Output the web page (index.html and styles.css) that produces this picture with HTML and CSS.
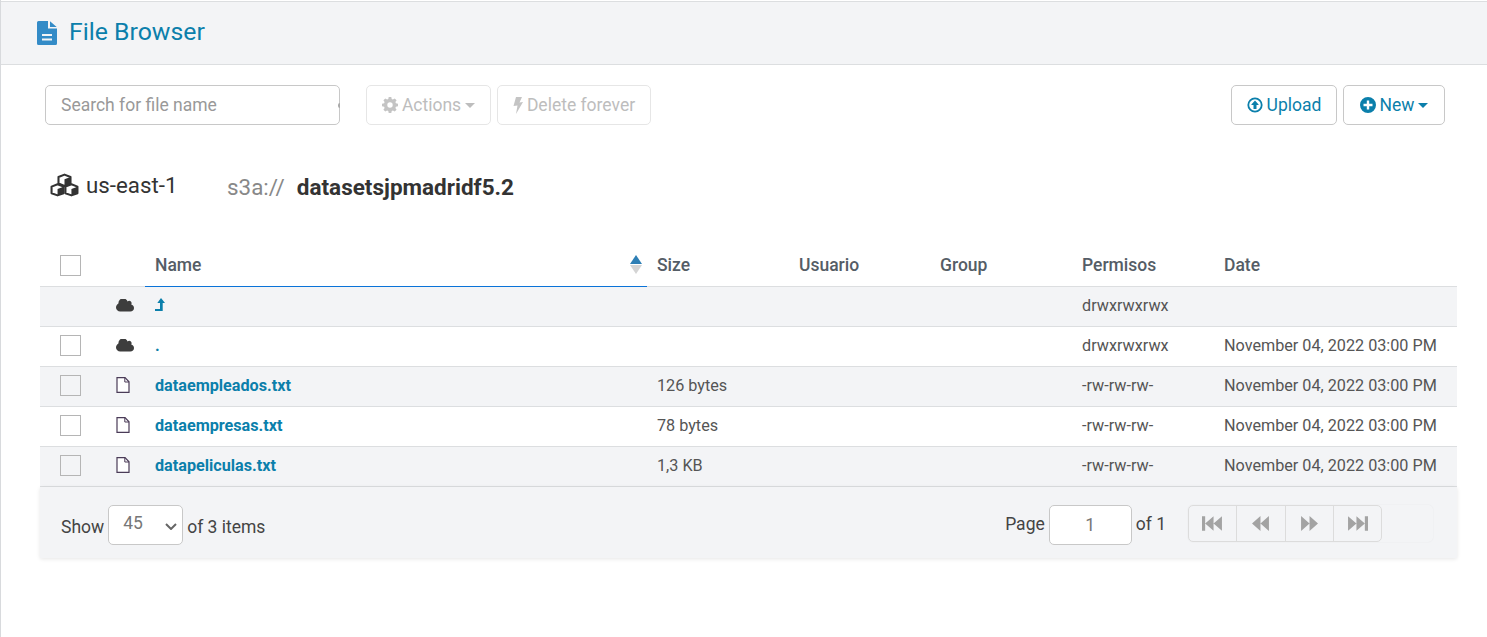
FILE: index.html
```html
<!DOCTYPE html>
<html lang="en">
<head>
  <meta charset="UTF-8" />
  <title>File Browser</title>
  <link rel="stylesheet" href="styles.css">
</head>
<body>

  <header class="page-header">
    <svg class="title-icon" viewBox="0 0 20 24"><path fill="#338bc7" d="M1.500 0H11v7.500h9V22.500a1.500 1.500 0 0 1-1.500 1.500H1.500A1.500 1.500 0 0 1 0 22.500V1.500A1.500 1.500 0 0 1 1.500 0zM13 0.300L19.700 6H13zM5 13v2h10v-2zM5 17.500v2h10v-2z" fill-rule="evenodd"/></svg>
    <h1>File Browser</h1>
  </header>

  <main class="content">
    <div class="toolbar">
      <div class="toolbar-left">
        <div class="search-box">
          <input class="search" type="text" placeholder="Search for file name" />
          <span class="search-clip"></span>
        </div>
        <button class="btn btn-disabled btn-actions">
          <svg class="icon" viewBox="0 0 16 16"><path fill="#c4c4c4" fill-rule="evenodd" d="M6.700 0h2.600l.4 2.100 1.200.5L12.700 1.400l1.900 1.900-1.200 1.800.5 1.200 2.100.4v2.600l-2.100.4-.5 1.200 1.200 1.800-1.900 1.900-1.800-1.200-1.200.5-.4 2.100H6.700l-.4-2.100-1.200-.5-1.800 1.200-1.900-1.900 1.200-1.800-.5-1.200L0 9.300V6.700l2.100-.4.5-1.200-1.200-1.800 1.900-1.900 1.800 1.200 1.200-.5zM8 5.300a2.700 2.700 0 1 0 0 5.400 2.700 2.700 0 0 0 0-5.400z"/></svg>
          Actions <span class="caret"></span>
        </button>
        <button class="btn btn-disabled btn-delete">
          <svg class="icon icon-bolt" viewBox="0 0 10 17"><path fill="#c4c4c4" d="M3 0h6L6.500 5.500 10 5 3 17l1.500-8.500L0.500 9z"/></svg>
          Delete forever
        </button>
      </div>
      <div class="toolbar-right">
        <button class="btn btn-upload">
          <svg class="icon" viewBox="0 0 16 16"><circle cx="8" cy="8" r="6.700" fill="none" stroke="#0b7fab" stroke-width="1.800"/><path fill="#0b7fab" d="M8 3.600l3.600 3.900v.6H9.500v4H6.500v-4H4.400v-.6z"/></svg>
          Upload
        </button>
        <button class="btn btn-new">
          <svg class="icon" viewBox="0 0 16 16"><path fill="#0b7fab" fill-rule="evenodd" d="M8 0a8 8 0 1 1 0 16A8 8 0 0 1 8 0zM6.800 3.500v3.300H3.500v2.400h3.300v3.300h2.400V9.200h3.300V6.800H9.200V3.500z"/></svg>
          New <span class="caret"></span>
        </button>
      </div>
    </div>

    <div class="location">
      <div class="region">
        <svg class="cubes" viewBox="0 0 28 22"><g stroke="#333" stroke-width="2" stroke-linejoin="round" fill="#fff"><path d="M14 1l5.800 2.300v6.300L14 11.900 8.200 9.600V3.300z"/><path d="M7.300 10.300l5.800 2.300v6.300l-5.800 2.100-5.800-2.100v-6.300z"/><path d="M20.700 10.300l5.800 2.300v6.300l-5.800 2.100-5.800-2.100v-6.300z"/></g><path fill="#333" d="M14 5.500l5.800-2.200v6.300L14 11.900zM7.300 14.900l5.800-2.300v6.300l-5.800 2.100zM20.700 14.900l5.800-2.300v6.300l-5.800 2.100z"/></svg>
        <span>us-east-1</span>
      </div>
      <div class="path"><span class="scheme">s3a://</span><strong>datasetsjpmadridf5.2</strong></div>
    </div>

    <table class="files">
      <colgroup>
        <col class="col-check"><col class="col-icon"><col class="col-name"><col class="col-size"><col class="col-user"><col class="col-group"><col class="col-perm"><col>
      </colgroup>
      <thead>
        <tr>
          <th class="check-cell"><span class="check"></span></th>
          <th></th>
          <th class="sorted">Name<span class="sort-arrows"><i class="up"></i><i class="down"></i></span></th>
          <th>Size</th>
          <th>Usuario</th>
          <th>Group</th>
          <th>Permisos</th>
          <th>Date</th>
        </tr>
      </thead>
      <tbody>
        <tr class="odd">
          <td></td>
          <td class="icon-cell"><svg class="cloud" viewBox="0 230 1920 1310"><path fill="#3d3d3d" d="M1920 1152q0 159-112.500 271.500t-271.500 112.500h-1088q-185 0-316.500-131.500t-131.500-316.500q0-132 71-241.500t187-163.500q-2-28-2-43 0-212 150-362t362-150q158 0 286.500 88t187.500 230q70-62 166-62 106 0 181 75t75 181q0 75-41 138 129 30 213 134.500t84 239.500z"/></svg></td>
          <td><a href="#"><svg class="level-up" viewBox="0 0 10 13"><path fill="#0b7fab" d="M6 0l4 5H7.700v8H0v-2h5V5H2.300z"/></svg></a></td>
          <td></td><td></td><td></td>
          <td>drwxrwxrwx</td>
          <td></td>
        </tr>
        <tr>
          <td class="check-cell"><span class="check"></span></td>
          <td class="icon-cell"><svg class="cloud" viewBox="0 230 1920 1310"><path fill="#3d3d3d" d="M1920 1152q0 159-112.500 271.500t-271.500 112.500h-1088q-185 0-316.500-131.500t-131.500-316.500q0-132 71-241.500t187-163.500q-2-28-2-43 0-212 150-362t362-150q158 0 286.500 88t187.500 230q70-62 166-62 106 0 181 75t75 181q0 75-41 138 129 30 213 134.500t84 239.500z"/></svg></td>
          <td><a href="#">.</a></td>
          <td></td><td></td><td></td>
          <td>drwxrwxrwx</td>
          <td>November 04, 2022 03:00 PM</td>
        </tr>
        <tr class="odd">
          <td class="check-cell"><span class="check"></span></td>
          <td class="icon-cell"><svg class="file" viewBox="0 0 14 16"><path fill="#fff" stroke="#4a3b57" stroke-width="1.200" d="M1 .6h8l4 4.200v10.600H1z"/><path fill="none" stroke="#4a3b57" d="M8.800 .6v4.400H13"/></svg></td>
          <td><a href="#">dataempleados.txt</a></td>
          <td>126 bytes</td><td></td><td></td>
          <td>-rw-rw-rw-</td>
          <td>November 04, 2022 03:00 PM</td>
        </tr>
        <tr>
          <td class="check-cell"><span class="check"></span></td>
          <td class="icon-cell"><svg class="file" viewBox="0 0 14 16"><path fill="#fff" stroke="#4a3b57" stroke-width="1.200" d="M1 .6h8l4 4.200v10.600H1z"/><path fill="none" stroke="#4a3b57" d="M8.800 .6v4.400H13"/></svg></td>
          <td><a href="#">dataempresas.txt</a></td>
          <td>78 bytes</td><td></td><td></td>
          <td>-rw-rw-rw-</td>
          <td>November 04, 2022 03:00 PM</td>
        </tr>
        <tr class="odd">
          <td class="check-cell"><span class="check"></span></td>
          <td class="icon-cell"><svg class="file" viewBox="0 0 14 16"><path fill="#fff" stroke="#4a3b57" stroke-width="1.200" d="M1 .6h8l4 4.200v10.600H1z"/><path fill="none" stroke="#4a3b57" d="M8.800 .6v4.400H13"/></svg></td>
          <td><a href="#">datapeliculas.txt</a></td>
          <td>1,3 KB</td><td></td><td></td>
          <td>-rw-rw-rw-</td>
          <td>November 04, 2022 03:00 PM</td>
        </tr>
      </tbody>
    </table>

    <div class="table-footer">
      <div class="show">
        <span>Show</span>
        <div class="select-wrap">
          <select class="page-size"><option>45</option></select>
          <svg class="chevron" viewBox="0 0 12 7"><path fill="none" stroke="#666" stroke-width="2" d="M1 1l5 5 5-5"/></svg>
        </div>
        <span>of 3 items</span>
      </div>
      <div class="paging">
        <span>Page</span>
        <input class="page-input" type="text" value="1" />
        <span>of 1</span>
        <div class="pager-wrap">
          <div class="pager">
            <button><svg viewBox="0 0 20 14"><path d="M0 0h3v14H0zM3 7l8-7v14zM11 7l8-7v14z"/></svg></button>
            <button><svg class="short" viewBox="0 0 17 14"><path d="M0 7l8-7v14zM8 7l8-7v14z"/></svg></button>
            <button><svg class="short" viewBox="0 0 17 14"><path d="M1 0l8 7-8 7zM9 0l8 7-8 7z"/></svg></button>
            <button><svg viewBox="0 0 20 14"><path d="M1 0l8 7-8 7zM9 0l8 7-8 7zM17 0h3v14h-3z"/></svg></button>
          </div>
        </div>
      </div>
    </div>
  </main>

</body>
</html>
```

FILE: styles.css
```css
* {
  box-sizing: border-box;
}

html, body {
  height: 100%;
}

body {
  margin: 0;
  padding-top: 1px;
  font-family: Roboto, "Liberation Sans", sans-serif;
  font-size: 14px;
  color: #444;
  background-color: #fff;
  border-left: 1px solid #d8dadd;
  overflow: hidden;
}

.page-header {
  height: 64px;
  display: flex;
  align-items: center;
  padding: 0 0 4px 36px;
  background-color: #f3f4f6;
  border-top: 1px solid #dcdee0;
  border-bottom: 1px solid #dcdee0;
}

.title-icon {
  width: 20px;
  height: 24px;
  margin: 4px 12px 0 0;
}

.page-header h1 {
  margin: 0;
  font-size: 24.800px;
  font-weight: 400;
  color: #0b7fab;
}

.content {
  padding: 20px 30px 0 39px;
}

.toolbar {
  display: flex;
  justify-content: space-between;
  padding: 0 12px 0 5px;
}

.toolbar-left, .toolbar-right {
  display: flex;
  gap: 6px;
}

.search-box {
  position: relative;
  margin-right: 20px;
}

.search {
  display: block;
  width: 295px;
  height: 40px;
  padding: 0 15px;
  font-family: inherit;
  font-size: 17.500px;
  border: 1px solid #c8c8c8;
  border-radius: 5px;
  outline: none;
}

.search::placeholder {
  color: #999;
}

.search-clip {
  position: absolute;
  right: 0;
  top: 18px;
  width: 2px;
  height: 5px;
  background-color: #aaa;
  border-radius: 2px 0 0 2px;
}

.btn {
  height: 40px;
  display: inline-flex;
  align-items: center;
  justify-content: center;
  gap: 4px;
  font-family: inherit;
  font-size: 17.500px;
  background-color: #fff;
  color: #0b7fab;
  border: 1px solid #c8c8c8;
  border-radius: 5px;
}

.btn-disabled {
  color: #bdbdbd;
  border-color: #e6e6e6;
}

.btn-actions { width: 125px; }
.btn-delete { width: 154px; }
.btn-upload { width: 106px; }
.btn-new { width: 102px; }

.icon {
  width: 16px;
  height: 16px;
}

.icon-bolt {
  width: 10px;
  height: 17px;
}

.caret {
  width: 0;
  height: 0;
  border-left: 5px solid transparent;
  border-right: 5px solid transparent;
  border-top: 5px solid currentColor;
}

.location {
  display: flex;
  align-items: center;
  height: 44px;
  margin-top: 40px;
  padding-left: 10px;
}

.region {
  width: 177px;
  display: flex;
  align-items: center;
  gap: 7px;
  margin-top: -5px;
  font-size: 22.300px;
  color: #333;
}

.cubes {
  width: 29px;
  height: 24px;
}

.scheme {
  margin-right: 12px;
  font-size: 22.400px;
  color: #888;
}

.path strong {
  font-size: 22.500px;
  font-weight: 700;
  color: #333;
}

.files {
  width: 100%;
  margin-top: 37px;
  table-layout: fixed;
  border-collapse: collapse;
}

.col-check { width: 65px; }
.col-icon { width: 40px; }
.col-name { width: 502px; }
.col-size { width: 142px; }
.col-user { width: 141px; }
.col-group { width: 142px; }
.col-perm { width: 142px; }

.files th {
  height: 40px;
  padding: 0 10px 2px;
  text-align: left;
  font-size: 17.500px;
  font-weight: 500;
  color: #555d66;
  border-bottom: 1px solid #dcdee0;
}

.files th.sorted {
  position: relative;
  border-bottom-color: #0a73d8;
}

.sort-arrows {
  position: absolute;
  right: 5px;
  top: 9px;
  display: flex;
  flex-direction: column;
  gap: 1px;
}

.sort-arrows i {
  width: 0;
  height: 0;
  border-left: 6px solid transparent;
  border-right: 6px solid transparent;
}

.sort-arrows .up {
  border-bottom: 9px solid #2e7fb5;
}

.sort-arrows .down {
  border-top: 9px solid #d4d4d4;
}

.files td {
  height: 40px;
  padding: 0 10px 2px;
  font-size: 16.200px;
  color: #555;
  border-bottom: 1px solid #dcdee0;
  white-space: nowrap;
}

.files tr.odd td {
  background-color: #f3f4f6;
}

.files td a {
  font-weight: 700;
  color: #0b7fab;
  text-decoration: none;
}

.files .check-cell {
  padding-left: 20px;
}

.files th.check-cell {
  padding-bottom: 0;
}

.check {
  display: block;
  width: 21px;
  height: 21px;
  border: 1px solid #b5b5b5;
}

.files .icon-cell {
  padding: 0 0 2px 11px;
}

.icon-cell svg {
  display: block;
}

.cloud {
  width: 18px;
  height: 13px;
}

.file {
  width: 14px;
  height: 16px;
}

.level-up {
  width: 10px;
  height: 13px;
}

.table-footer {
  height: 71px;
  display: flex;
  justify-content: space-between;
  padding: 18px 24px 0 21px;
  font-size: 17.500px;
  color: #444;
  background-color: #f3f4f6;
  box-shadow: 0 1px 4px rgba(0, 0, 0, 0.1);
}

.show, .paging {
  display: flex;
  align-items: flex-start;
  gap: 4px;
  line-height: 45px;
}

.select-wrap {
  position: relative;
  height: 40px;
}

.page-size {
  display: block;
  width: 75px;
  height: 40px;
  padding: 0 0 3px 14px;
  font-family: inherit;
  font-size: 17.500px;
  color: #777;
  background-color: #fff;
  border: 1px solid #c8c8c8;
  border-radius: 5px;
  appearance: none;
}

.chevron {
  position: absolute;
  left: 57px;
  top: 18px;
  width: 12px;
  height: 7px;
}

.paging {
  line-height: 38px;
}

.page-input {
  width: 83px;
  height: 40px;
  text-align: center;
  font-family: inherit;
  font-size: 17.500px;
  color: #777;
  background-color: #fff;
  border: 1px solid #c8c8c8;
  border-radius: 5px;
}

.pager-wrap {
  width: 245px;
  height: 37px;
  margin-left: 18px;
  border-radius: 5px;
  box-shadow: 0 0 2px rgba(0, 0, 0, 0.06);
}

.pager {
  width: 194px;
  height: 37px;
  display: flex;
  border: 1px solid #dcdcdc;
  border-radius: 5px;
}

.pager button {
  flex: 1;
  display: flex;
  align-items: center;
  justify-content: center;
  padding: 0;
  background: none;
  border: none;
  border-right: 1px solid #dcdcdc;
}

.pager button:last-child {
  border-right: none;
}

.pager svg {
  width: 21px;
  height: 15px;
  fill: #a3a3a3;
}

.pager svg.short {
  width: 18px;
}
```
